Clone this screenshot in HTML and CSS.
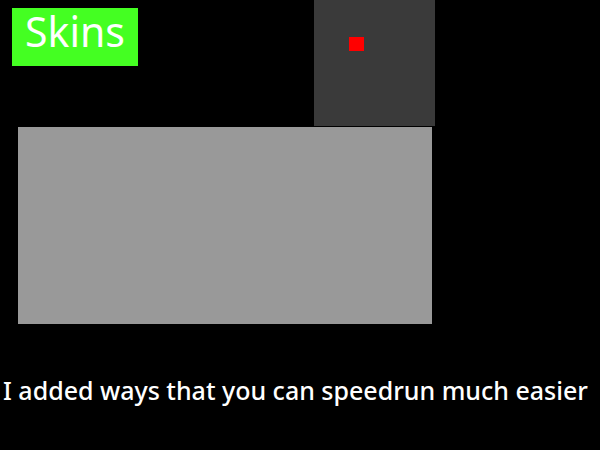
FILE: index.html
```html
<!DOCTYPE html>
<html>
<head>
<meta charset="utf-8">
<link rel="stylesheet" href="styles.css">
</head>
<body>
<div class="stage">
  <div class="top">
    <div class="skins">Skins</div>
    <div class="preview"><div class="dot"></div></div>
  </div>
  <div class="panel"></div>
  <p class="caption">I added ways that you can speedrun much easier</p>
</div>
</body>
</html>
```

FILE: styles.css
```css
html, body {
  margin: 0;
  padding: 0;
  background: #000;
  width: 600px;
  height: 450px;
  overflow: hidden;
  font-family: "Noto Sans", "Open Sans", sans-serif;
}
.stage {
  display: flex;
  flex-direction: column;
}
.top {
  display: flex;
  align-items: flex-start;
}
.skins {
  margin: 8px 0 0 12px;
  width: 126px;
  height: 46px;
  padding-bottom: 12px;
  background: #44ff22;
  color: #fff;
  font-size: 41px;
  font-weight: 400;
  line-height: 46px;
  text-align: center;
}
.preview {
  margin-left: 176px;
  width: 121px;
  height: 126px;
  background: #3a3a3a;
  box-sizing: border-box;
  padding: 37px 0 0 35px;
}
.dot {
  width: 15px;
  height: 14px;
  background: #ff0000;
}
.panel {
  margin: 1px 0 0 18px;
  width: 414px;
  height: 197px;
  background: #999999;
}
.caption {
  margin: 51px 0 0 3px;
  color: #fff;
  font-size: 25px;
  font-weight: 500;
  line-height: 30px;
  white-space: nowrap;
}
```
